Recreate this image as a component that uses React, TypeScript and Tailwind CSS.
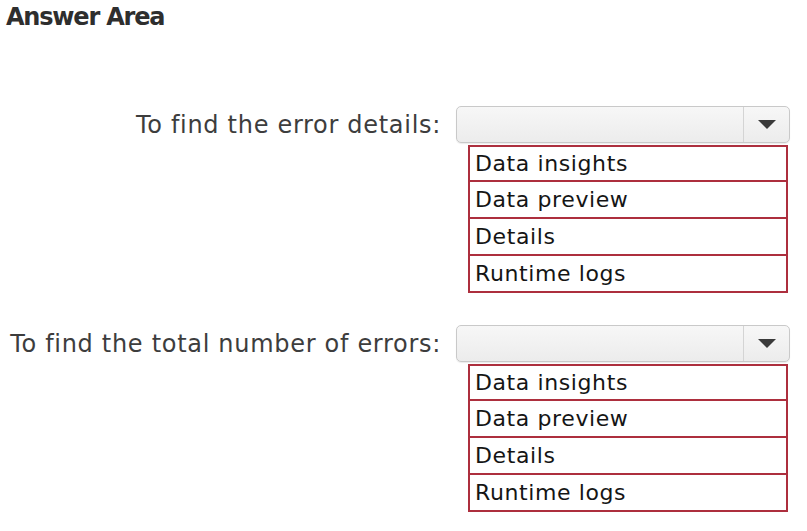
const options = ["Data insights", "Data preview", "Details", "Runtime logs"];

const Dropdown = () => {
  return (
    <div className="flex flex-col">
      <div className="flex h-[37px] w-[334px] rounded-[5px] border border-[#c9c9c9] bg-gradient-to-b from-[#f7f7f7] to-[#ececec] shadow-[0_1px_1px_rgba(0,0,0,0.08)]">
        <div className="flex-1" />
        <div className="flex w-[46px] items-center justify-center border-l border-[#d4d4d4]">
          <svg width="20" height="11" viewBox="0 0 20 11">
            <path d="M1 1 H19 L10 10 Z" fill="#3a3a3a" />
          </svg>
        </div>
      </div>
      <ul className="ml-[12px] mt-[2px] w-[320px]">
        {options.map((o, i) => (
          <li
            key={o}
            className={`flex h-[37px] items-center border-x-2 border-b-2 border-[#ad2f3e] pl-[5px] text-[22px] tracking-[0.6px] text-[#151515] ${
              i === 0 ? "border-t-2" : ""
            }`}
          >
            {o}
          </li>
        ))}
      </ul>
    </div>
  );
};

const Row = ({ label }: { label: string }) => {
  return (
    <div className="flex">
      <div className="flex h-[37px] w-[441px] items-center justify-end text-[24px] tracking-[0.7px] text-[#3d3d3d]">
        {label}
      </div>
      <div className="ml-[15px]">
        <Dropdown />
      </div>
    </div>
  );
};

export default function App() {
  return (
    <div className="h-[531px] w-[807px] overflow-hidden bg-white font-['DejaVu_Sans',sans-serif]">
      <h2 className="pl-[6px] text-[24px] leading-[34px] font-bold tracking-[-1.2px] text-[#2e2e2e]">
        Answer Area
      </h2>
      <div className="mt-[72px] flex flex-col gap-[32px]">
        <Row label="To find the error details:" />
        <Row label="To find the total number of errors:" />
      </div>
    </div>
  );
}
